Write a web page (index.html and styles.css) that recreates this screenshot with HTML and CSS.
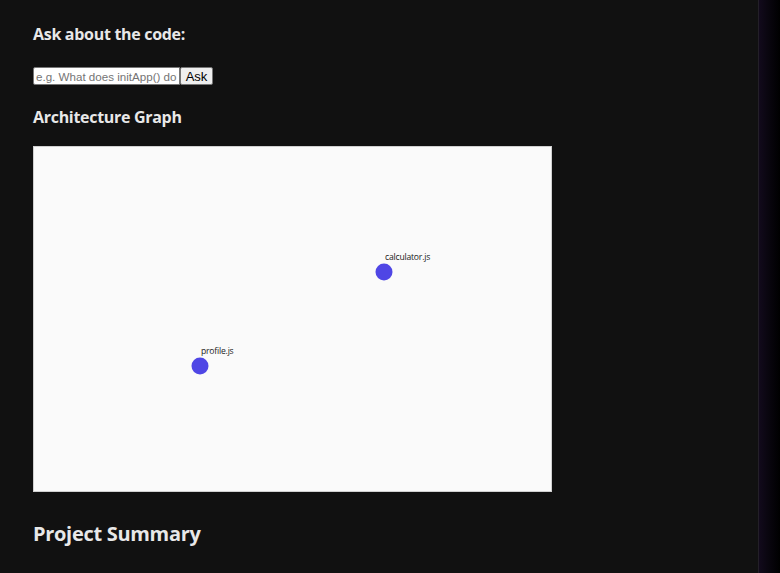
FILE: index.html
```html
<!DOCTYPE html>
<html>
<head>
<meta charset="utf-8">
<link rel="stylesheet" href="styles.css">
</head>
<body>
<div class="page">
  <main class="main">
    <h3 class="heading">Ask about the code:</h3>
    <div class="ask-row">
      <input class="ask-input" type="text" placeholder="e.g. What does initApp() do?">
      <button class="ask-btn">Ask</button>
    </div>
    <h3 class="heading graph-heading">Architecture Graph</h3>
    <div class="graph">
      <svg class="graph-svg" width="517" height="344" viewBox="0 0 517 344">
        <text class="node-label" x="351" y="113">calculator.js</text>
        <circle class="node" cx="350" cy="125" r="8.5"></circle>
        <text class="node-label" x="167" y="207">profile.js</text>
        <circle class="node" cx="166" cy="219" r="8.5"></circle>
      </svg>
    </div>
    <h2 class="summary-heading">Project Summary</h2>
  </main>
  <div class="side"></div>
</div>
</body>
</html>
```
FILE: styles.css
```css
html, body {
  margin: 0;
  padding: 0;
  height: 100%;
  background: #000;
  overflow: hidden;
}
.page {
  display: flex;
  height: 573px;
}
.main {
  width: 759px;
  flex: none;
  background: #111111;
  border-right: 1px solid #231f28;
  padding: 0 0 0 33px;
  box-sizing: border-box;
  color: #e6e6e6;
  font-family: "Open Sans", "Noto Sans", sans-serif;
}
.side {
  flex: 1;
  background: linear-gradient(to right, #120a1c, #0a0610 40%, #000 100%);
}
.heading {
  margin: 23px 0 0 0;
  font-size: 16px;
  font-weight: 700;
  line-height: 22px;
  letter-spacing: -0.3px;
  color: #e8e8e8;
}
.ask-row {
  display: flex;
  margin-top: 22px;
}
.ask-input {
  width: 147px;
  height: 18px;
  box-sizing: border-box;
  border: 1px solid #767676;
  border-radius: 2px 0 0 2px;
  padding: 1px 2px;
  font-family: "Liberation Sans", Arial, sans-serif;
  font-size: 11.6px;
  background: #fff;
  color: #000;
  outline: none;
}
.ask-input::placeholder {
  color: #757575;
}
.ask-btn {
  height: 18px;
  width: 33px;
  box-sizing: border-box;
  border: 1px solid #767676;
  border-radius: 2px;
  background: #efefef;
  font-family: "Liberation Sans", Arial, sans-serif;
  font-size: 13px;
  padding: 0;
  color: #000;
}
.graph-heading {
  margin-top: 21px;
}
.graph {
  margin-top: 18px;
  width: 519px;
  height: 346px;
  box-sizing: border-box;
  border: 1px solid #d0d0d0;
  background: #fafafa;
}
.graph-svg {
  display: block;
}
.node {
  fill: #4f46e5;
}
.node-label {
  font-family: "Open Sans", "Noto Sans", sans-serif;
  font-size: 8.6px;
  letter-spacing: -0.2px;
  fill: #1a1a1a;
}
.summary-heading {
  margin: 28px 0 0 0;
  font-size: 20px;
  font-weight: 700;
  line-height: 28px;
  letter-spacing: -0.3px;
  color: #e8e8e8;
}
```
